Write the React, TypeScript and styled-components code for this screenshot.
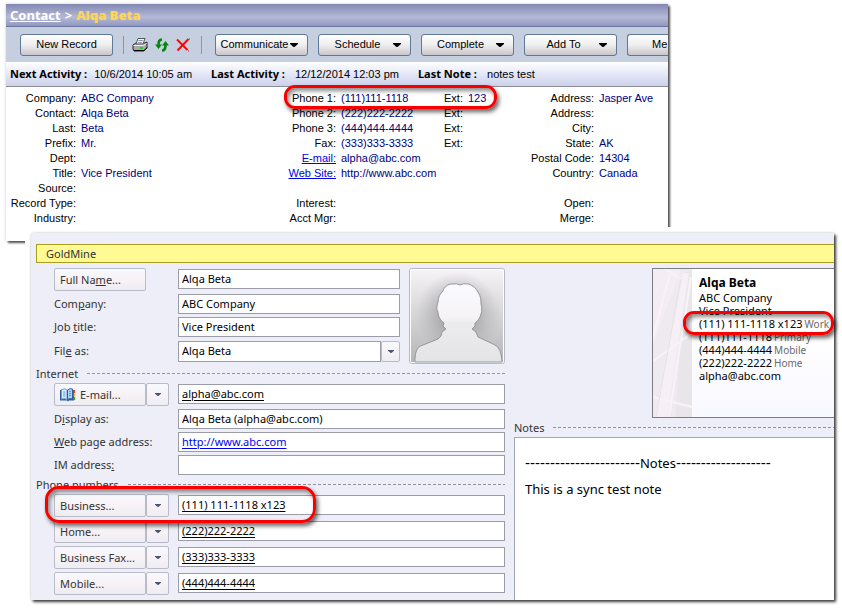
import React from 'react';
import styled, { createGlobalStyle, css } from 'styled-components';

const GlobalStyle = createGlobalStyle`
  *, *::before, *::after { box-sizing: border-box; }
  body { margin: 0; background: #fff; }
  button, input { font: inherit; color: inherit; margin: 0; }
`;

const recordFont = '"Liberation Sans", Arial, sans-serif';
const formFont = '"Noto Sans", "Open Sans", sans-serif';

const Page = styled.main`
  padding: 4px 8px 10px 6px;
`;

/* ---------- Contact record window ---------- */

const RecordWindow = styled.section`
  margin-right: 166px;
  background: #fff;
  font: 11px/15px ${recordFont};
  color: #000;
  box-shadow: 2px 2px 2px rgba(0, 0, 0, 0.65), 0 0 3px rgba(0, 0, 0, 0.2);
`;

const TitleBar = styled.header`
  display: flex;
  align-items: center;
  gap: 4px;
  height: 23px;
  padding: 0 4px;
  border-bottom: 1px solid #6b75a0;
  background: linear-gradient(#8288b2, #b4b9d7 60%, #9298be);
  color: #fff;
  font: bold 13px/18px ${formFont};

  a { color: #fff; }
  strong { color: #ffd45a; }
`;

const Toolbar = styled.div`
  display: flex;
  align-items: center;
  gap: 10px;
  height: 35px;
  padding-left: 14px;
  overflow: hidden;
  background: #c5cfdf;
`;

const ToolButton = styled.button<{ $cut?: boolean }>`
  display: flex;
  align-items: center;
  justify-content: ${(p) => (p.$cut ? 'flex-start' : 'center')};
  flex: ${(p) => (p.$cut ? '1 0 40px' : '0 0 93px')};
  height: 22px;
  padding: ${(p) => (p.$cut ? '0 0 0 24px' : '0 9px 0 3px')};
  border: 1px solid #5f7896;
  border-width: ${(p) => (p.$cut ? '1px 0 1px 1px' : '1px')};
  border-radius: ${(p) => (p.$cut ? '3px 0 0 3px' : '3px')};
  background: linear-gradient(#fff, #eeeeef 50%, #c9c5c9);
  white-space: nowrap;

  span { flex: ${(p) => (p.$cut ? 'none' : '1')}; text-align: center; }
`;

const PlainToolButton = styled(ToolButton)`
  padding: 0;
`;

const ToolGroup = styled.div`
  display: flex;
  align-items: center;
  gap: 7px;
  margin-right: 3px;
  padding: 0 11px 0 8px;
  border: solid #8d95a5;
  border-width: 0 1px;
  height: 18px;
`;

const IconButton = styled.button`
  display: flex;
  padding: 0;
  border: 0;
  background: none;
`;

const ActivityBar = styled.div`
  display: flex;
  align-items: center;
  gap: 19px;
  height: 25px;
  padding: 0 4px;
  border-bottom: 1px solid #8c8c96;
  background: linear-gradient(#fff, #dfe3f5 60%, #ccd2ea);
  white-space: nowrap;

  b { margin-right: 7px; font: bold 11px/15px ${formFont}; }
`;

const RecordFields = styled.div`
  display: grid;
  grid-template-columns: minmax(0, 260fr) minmax(0, 258fr) minmax(0, 144fr);
  padding: 4px 0 15px;
`;

const RecordRow = styled.div`
  position: relative;
  display: grid;
  grid-template-columns: 70px 98px auto 1fr;
  column-gap: 5px;
  height: 15px;
  white-space: nowrap;
`;

const RecordLabel = styled.span`
  text-align: right;
  a { color: #0000e0; }
`;

const RecordValue = styled.span`
  color: #000080;
`;

/* ---------- Outlook contact window ---------- */

const FormWindow = styled.section`
  position: relative;
  margin: -8px 0 0 25px;
  padding: 11px 0 0 5px;
  background: #eeeef8;
  border-radius: 4px 0 0 0;
  font: 11px/15px ${formFont};
  color: #333;
  box-shadow: 2px 2px 3px rgba(0, 0, 0, 0.75), 0 0 3px rgba(0, 0, 0, 0.2), 0 0 0 6px #fff;
`;

const CategoryBar = styled.div`
  height: 19px;
  padding-left: 9px;
  border: 1px solid #aa9e1e;
  border-right: 0;
  background: #fffa94;
  line-height: 18px;
`;

const FormColumns = styled.div`
  display: grid;
  grid-template-columns: minmax(0, 469fr) minmax(0, 320fr);
  column-gap: 9px;
  padding-top: 5px;
`;

const FormColumn = styled.div`
  display: flex;
  flex-direction: column;
  min-width: 0;
`;

const FieldsColumn = styled(FormColumn)`
  padding-bottom: 5px;
`;

const Identity = styled.div`
  display: flex;
  gap: 9px;
`;

const Rows = styled.div`
  display: flex;
  flex: 1;
  flex-direction: column;
  gap: 3px;
  min-width: 0;
  padding-left: 18px;
`;

const underlined = css`
  text-decoration: underline;
  text-underline-offset: 2px;
`;

const TextBox = styled.input<{ $link?: 'black' | 'blue' }>`
  width: 100%;
  min-width: 0;
  height: 20px;
  padding: 0 3px 1px;
  border: 1px solid #9a9da8;
  border-radius: 0;
  background: #fff;
  color: ${(p) => (p.$link === 'blue' ? '#0000ee' : '#000')};
  ${(p) => p.$link && underlined}
`;

const Row = styled.div<{ $height: number }>`
  position: relative;
  display: grid;
  grid-template-columns: 115px 1fr;
  column-gap: 9px;
  align-items: center;
  height: ${(p) => p.$height}px;
  white-space: nowrap;

  > label { padding-bottom: 1px; }
  > ${TextBox} {
    align-self: start;
    margin-top: ${(p) => (p.$height > 20 ? 1 : 0)}px;
  }
`;

const surface = css`
  border: 1px solid #b9bcc8;
  border-radius: 2px;
  background: linear-gradient(#f7f9fe, #f8f2f5 50%, #ededf3);
`;

const FieldButton = styled.button`
  ${surface}
  display: flex;
  align-items: center;
  gap: 4px;
  width: 92px;
  height: 23px;
  padding: 0 5px;
  white-space: nowrap;
`;

const DropButton = styled.button`
  ${surface}
  display: flex;
  align-items: center;
  justify-content: center;
  flex: 0 0 23px;
  height: 23px;
  padding: 0;
`;

const Split = styled.div`
  display: flex;
`;

const Combo = styled.div`
  display: grid;
  grid-template-columns: 1fr 19px;

  ${TextBox}, ${DropButton} { height: 21px; }
`;

const Photo = styled.div`
  flex: 0 0 96px;
  height: 96px;
  svg { display: block; }
`;

const SectionTitle = styled.h2`
  display: flex;
  align-items: center;
  gap: 9px;
  height: 19px;
  margin: 0;
  font: inherit;

  &::after {
    content: '';
    flex: 1;
    height: 1px;
    background: repeating-linear-gradient(90deg, #8f919c 0 3px, transparent 3px 5px);
  }
`;

const Card = styled.article`
  display: grid;
  grid-template-columns: 39px 1fr;
  column-gap: 7px;
  width: 182px;
  height: 150px;
  margin-left: auto;
  border: 1px solid #7d7d84;
  border-right: 0;
  background: linear-gradient(#fff 40%, #f8f8ff);
  color: #000;
  line-height: 13px;
  white-space: nowrap;
`;

const CardText = styled.div`
  padding-top: 6px;

  h3 { margin: 0; font: bold 12px/16px ${formFont}; }
  small { margin-left: 2px; font-size: 10px; color: #6a6a6a; }
`;

const CardLine = styled.div`
  position: relative;
  height: 13px;
`;

const NotesBox = styled.div`
  flex: 1;
  padding: 12px 10px 0;
  border: solid #9fa8b5;
  border-width: 1px 0 0 1px;
  background: #fff;
  color: #000;
  font-size: 13px;
  line-height: 26px;
  white-space: nowrap;
  overflow: hidden;

  p { height: 26px; margin: 0; }
`;

const Dashes = styled.span`
  font: 15px/26px ${recordFont};
`;

/* Red marker drawn over the row that contains it. */
const Callout = styled.span<{ $inset: string; $width: number; $radius: number }>`
  position: absolute;
  z-index: 2;
  inset: ${(p) => p.$inset};
  width: ${(p) => p.$width}px;
  border: 3px solid #f80000;
  border-radius: ${(p) => p.$radius}px;
  box-shadow: 2px 3px 4px rgba(0, 0, 0, 0.6), inset 2px 3px 4px rgba(0, 0, 0, 0.45);
  pointer-events: none;
`;

const Arrow = ({ size = 8, color = '#000' }: { size?: number; color?: string }) => (
  <svg width={size} height={size / 2} viewBox="0 0 8 4" aria-hidden="true">
    <path d="M0 0h8v1L4.500 4h-1L0 1z" fill={color} />
  </svg>
);

const PrinterIcon = () => (
  <svg width="16" height="16" viewBox="0 0 16 16" aria-hidden="true">
    <path d="M1 8 4 6h9l2-1v6l-3 3H2l-1-2z" fill="#aaa" stroke="#222" />
    <path d="M6 1.500h7L11 7H4z" fill="#f2f5fb" stroke="#555" />
    <path d="M6.500 3.500H11M6 5.500h4" stroke="#8293ad" />
    <path d="M1.500 8.500h10l3-2" stroke="#eee" fill="none" />
    <path d="M2 13.500h10l3-3" stroke="#000" fill="none" />
    <path d="M8 11h3" stroke="#1fd02f" strokeWidth="2" />
  </svg>
);

const RefreshIcon = () => (
  <svg width="14" height="14" viewBox="0 0 14 14" aria-hidden="true">
    <path d="M7 1.500C4.500 1.500 3.500 3 3.500 7M7 12.500c2.500 0 3.500-1.500 3.500-5.500" fill="none" stroke="#008a0c" strokeWidth="2.600" />
    <path d="M0 6.500h7L3.500 11zM7 7.500h7L10.500 3z" fill="#008a0c" />
  </svg>
);

const DeleteIcon = () => (
  <svg width="14" height="14" viewBox="0 0 14 14" aria-hidden="true">
    <path d="M1 1.500 11.500 12M12.500 1 1.500 12.500" stroke="#f50808" strokeWidth="2" fill="none" />
    <path d="M12 13h1M13 1h1" stroke="#f50808" />
  </svg>
);

const BookIcon = () => (
  <svg width="16" height="14" viewBox="0 0 16 14" aria-hidden="true">
    <path d="M0 2h14v10.500H9l-1 1-1-1H0z" fill="#2f5fa5" />
    <path d="M1.500 1.500q4-1.500 5.500.5v9.500q-2-1.500-5.500-.5z" fill="#dff0fd" stroke="#6a9bd5" />
    <path d="M7.500 2q2-2 5-1v10q-3-1-5 .5z" fill="#a9d0f5" stroke="#2f5fa5" />
    <path d="M3 4h2.500M3 6h2.500M3 8h2.500M9 3.500h2M9 5.500h2M9 7.500h2" stroke="#5f9bd7" />
    <path d="M14.500 2v3" stroke="#e64a3b" strokeWidth="1.500" />
    <path d="M14.500 5.500v3" stroke="#f1bb28" strokeWidth="1.500" />
    <path d="M14.500 9v3" stroke="#47a94b" strokeWidth="1.500" />
  </svg>
);

const Silhouette = () => (
  <svg width="96" height="96" viewBox="0 0 96 96" role="img" aria-label="Contact photo">
    <defs>
      <linearGradient id="backdrop" x2="0" y2="1">
        <stop offset="0" stopColor="#f6f3f6" />
        <stop offset="1" stopColor="#b5b5b8" />
      </linearGradient>
      <radialGradient id="halo" cx=".5" cy=".5" r=".5">
        <stop offset=".4" stopColor="#999" stopOpacity=".65" />
        <stop offset="1" stopColor="#aaa" stopOpacity="0" />
      </radialGradient>
      <linearGradient id="person" x2="0" y2="1">
        <stop offset="0" stopColor="#fbfbff" />
        <stop offset=".42" stopColor="#f6f3f6" />
        <stop offset=".5" stopColor="#ececee" />
        <stop offset="1" stopColor="#e4e3e5" />
      </linearGradient>
    </defs>
    <rect x=".5" y=".5" width="95" height="95" rx="2" fill="#fff" stroke="#b5b9c5" />
    <rect x="2" y="2" width="92" height="92" fill="url(#backdrop)" />
    <rect x="6" y="4" width="86" height="86" fill="url(#halo)" />
    <path
      d="M6 94C6 85 7 79 14 77L29 71 32 68 33 64 37 61 34 58 35 55C31 52 29 48 29 44C27 41 28 38 29 34C29 29 31 26 34 23C35 19 39 16 43 16Q48 15 51 17Q54 15 60 16C64 18 67 20 69 24C72 29 72 32 72 36C73 39 73 43 72 46C71 50 69 53 66 55L66 58 63 61 67 64 69 69 82 75C88 78 92 79 93 94z"
      fill="url(#person)"
      stroke="#95979c"
    />
  </svg>
);

const CardArt = () => (
  <svg width="39" height="148" viewBox="0 0 39 148" aria-hidden="true">
    <rect width="39" height="148" fill="#efeaf0" />
    <path d="M0 0h28L0 75z" fill="#f5edf4" />
    <path d="M32 4 22 148h17V0z" fill="#e9e6ea" />
    <path d="M30 4h6L14 148H2z" fill="#f6eff6" />
    <path d="M17 5 0 68M38 8 16 148M0 92l39-28M0 128l39 10M12 0 28 10" stroke="#f9f3f9" strokeWidth="2" fill="none" />
    <path d="M28 10 3 148" stroke="#e6e0e8" />
  </svg>
);

type Field = [label: string, value?: string, ext?: string];

const general: Field[] = [
  ['Company:', 'ABC Company'],
  ['Contact:', 'Alqa Beta'],
  ['Last:', 'Beta'],
  ['Prefix:', 'Mr.'],
  ['Dept:'],
  ['Title:', 'Vice President'],
  ['Source:'],
  ['Record Type:'],
  ['Industry:'],
];

const reach: Field[] = [
  ['Phone 1:', '(111)111-1118', '123'],
  ['Phone 2:', '(222)222-2222', ''],
  ['Phone 3:', '(444)444-4444', ''],
  ['Fax:', '(333)333-3333', ''],
  ['E-mail:', 'alpha@abc.com'],
  ['Web Site:', 'http://www.abc.com'],
  [''],
  ['Interest:'],
  ['Acct Mgr:'],
];

const location: Field[] = [
  ['Address:', 'Jasper Ave'],
  ['Address:'],
  ['City:'],
  ['State:', 'AK'],
  ['Postal Code:', '14304'],
  ['Country:', 'Canada'],
  [''],
  ['Open:'],
  ['Merge:'],
];

const phones = [
  ['Business...', '(111) 111-1118 x123'],
  ['Home...', '(222)222-2222'],
  ['Business Fax...', '(333)333-3333'],
  ['Mobile...', '(444)444-4444'],
];

const linkLabels = ['E-mail:', 'Web Site:'];

const FieldList = ({ fields }: { fields: Field[] }) => (
  <div>
    {fields.map(([label, value, ext], i) => (
      <RecordRow key={i}>
        <RecordLabel>{linkLabels.includes(label) ? <a href="#open">{label}</a> : label}</RecordLabel>
        <RecordValue>{value}</RecordValue>
        {ext !== undefined && <RecordLabel>Ext:</RecordLabel>}
        {ext && <RecordValue>{ext}</RecordValue>}
        {ext && <Callout $inset="-6px auto -3px 18px" $width={213} $radius={11} />}
      </RecordRow>
    ))}
  </div>
);

const DropArrow = ({ label }: { label: string }) => (
  <DropButton aria-label={label}>
    <Arrow size={6} color="#4a5578" />
  </DropButton>
);

export default function App() {
  return (
    <>
      <GlobalStyle />
      <Page>
        <RecordWindow>
          <TitleBar>
            <a href="#contact">Contact</a>
            <span>&gt;</span>
            <strong>Alqa Beta</strong>
          </TitleBar>
          <Toolbar>
            <PlainToolButton>New Record</PlainToolButton>
            <ToolGroup>
              <IconButton aria-label="Print"><PrinterIcon /></IconButton>
              <IconButton aria-label="Refresh"><RefreshIcon /></IconButton>
              <IconButton aria-label="Delete"><DeleteIcon /></IconButton>
            </ToolGroup>
            {['Communicate', 'Schedule', 'Complete', 'Add To'].map((name) => (
              <ToolButton key={name}>
                <span>{name}</span>
                <Arrow />
              </ToolButton>
            ))}
            <ToolButton $cut><span>Me</span></ToolButton>
          </Toolbar>
          <ActivityBar>
            <span><b>Next Activity :</b>10/6/2014 10:05 am</span>
            <span><b>Last Activity :</b> 12/12/2014 12:03 pm</span>
            <span><b>Last Note :</b> notes test</span>
          </ActivityBar>
          <RecordFields>
            <FieldList fields={general} />
            <FieldList fields={reach} />
            <FieldList fields={location} />
          </RecordFields>
        </RecordWindow>

        <FormWindow>
          <CategoryBar>GoldMine</CategoryBar>
          <FormColumns>
            <FieldsColumn>
              <Identity>
                <Rows>
                  <Row $height={23}>
                    <FieldButton><span>Full Na<u>m</u>e...</span></FieldButton>
                    <TextBox aria-label="Full name" defaultValue="Alqa Beta" />
                  </Row>
                  <Row $height={20}>
                    <label htmlFor="company">Com<u>p</u>any:</label>
                    <TextBox id="company" defaultValue="ABC Company" />
                  </Row>
                  <Row $height={20}>
                    <label htmlFor="job">Job <u>t</u>itle:</label>
                    <TextBox id="job" defaultValue="Vice President" />
                  </Row>
                  <Row $height={22}>
                    <label htmlFor="fileas">Fil<u>e</u> as:</label>
                    <Combo>
                      <TextBox id="fileas" defaultValue="Alqa Beta" />
                      <DropArrow label="File as options" />
                    </Combo>
                  </Row>
                </Rows>
                <Photo><Silhouette /></Photo>
              </Identity>

              <SectionTitle>Internet</SectionTitle>
              <Rows>
                <Row $height={23}>
                  <Split>
                    <FieldButton><BookIcon />E-mail...</FieldButton>
                    <DropArrow label="E-mail options" />
                  </Split>
                  <TextBox $link="black" aria-label="E-mail" defaultValue="alpha@abc.com" />
                </Row>
                <Row $height={20}>
                  <label htmlFor="display">D<u>i</u>splay as:</label>
                  <TextBox id="display" defaultValue="Alqa Beta (alpha@abc.com)" />
                </Row>
                <Row $height={20}>
                  <label htmlFor="web"><u>W</u>eb page address:</label>
                  <TextBox id="web" $link="blue" defaultValue="http://www.abc.com" />
                </Row>
                <Row $height={20}>
                  <label htmlFor="im">IM address<u>:</u></label>
                  <TextBox id="im" />
                </Row>
              </Rows>

              <SectionTitle>Phone numbers</SectionTitle>
              <Rows>
                {phones.map(([name, number], i) => (
                  <Row key={name} $height={23}>
                    <Split>
                      <FieldButton>{name}</FieldButton>
                      <DropArrow label={`${name} options`} />
                    </Split>
                    <TextBox $link="black" aria-label={name} defaultValue={number} />
                    {i === 0 && <Callout $inset="-8px auto -6px -9px" $width={271} $radius={14} />}
                  </Row>
                ))}
              </Rows>
            </FieldsColumn>

            <FormColumn>
              <Card>
                <CardArt />
                <CardText>
                  <h3>Alqa Beta</h3>
                  <CardLine>ABC Company</CardLine>
                  <CardLine>Vice President</CardLine>
                  <CardLine>
                    (111) 111-1118 x123<small>Work</small>
                    <Callout $inset="-6px auto -5px -16px" $width={151} $radius={11} />
                  </CardLine>
                  <CardLine>(111)111-1118<small>Primary</small></CardLine>
                  <CardLine>(444)444-4444<small>Mobile</small></CardLine>
                  <CardLine>(222)222-2222<small>Home</small></CardLine>
                  <CardLine>alpha@abc.com</CardLine>
                </CardText>
              </Card>
              <SectionTitle id="notes-title">Notes</SectionTitle>
              <NotesBox
                role="textbox"
                aria-multiline="true"
                aria-labelledby="notes-title"
                contentEditable
                suppressContentEditableWarning
              >
                <p>
                  <Dashes>{'-'.repeat(23)}</Dashes>Notes<Dashes>{'-'.repeat(19)}</Dashes>
                </p>
                <p>This is a sync test note</p>
              </NotesBox>
            </FormColumn>
          </FormColumns>
        </FormWindow>
      </Page>
    </>
  );
}
